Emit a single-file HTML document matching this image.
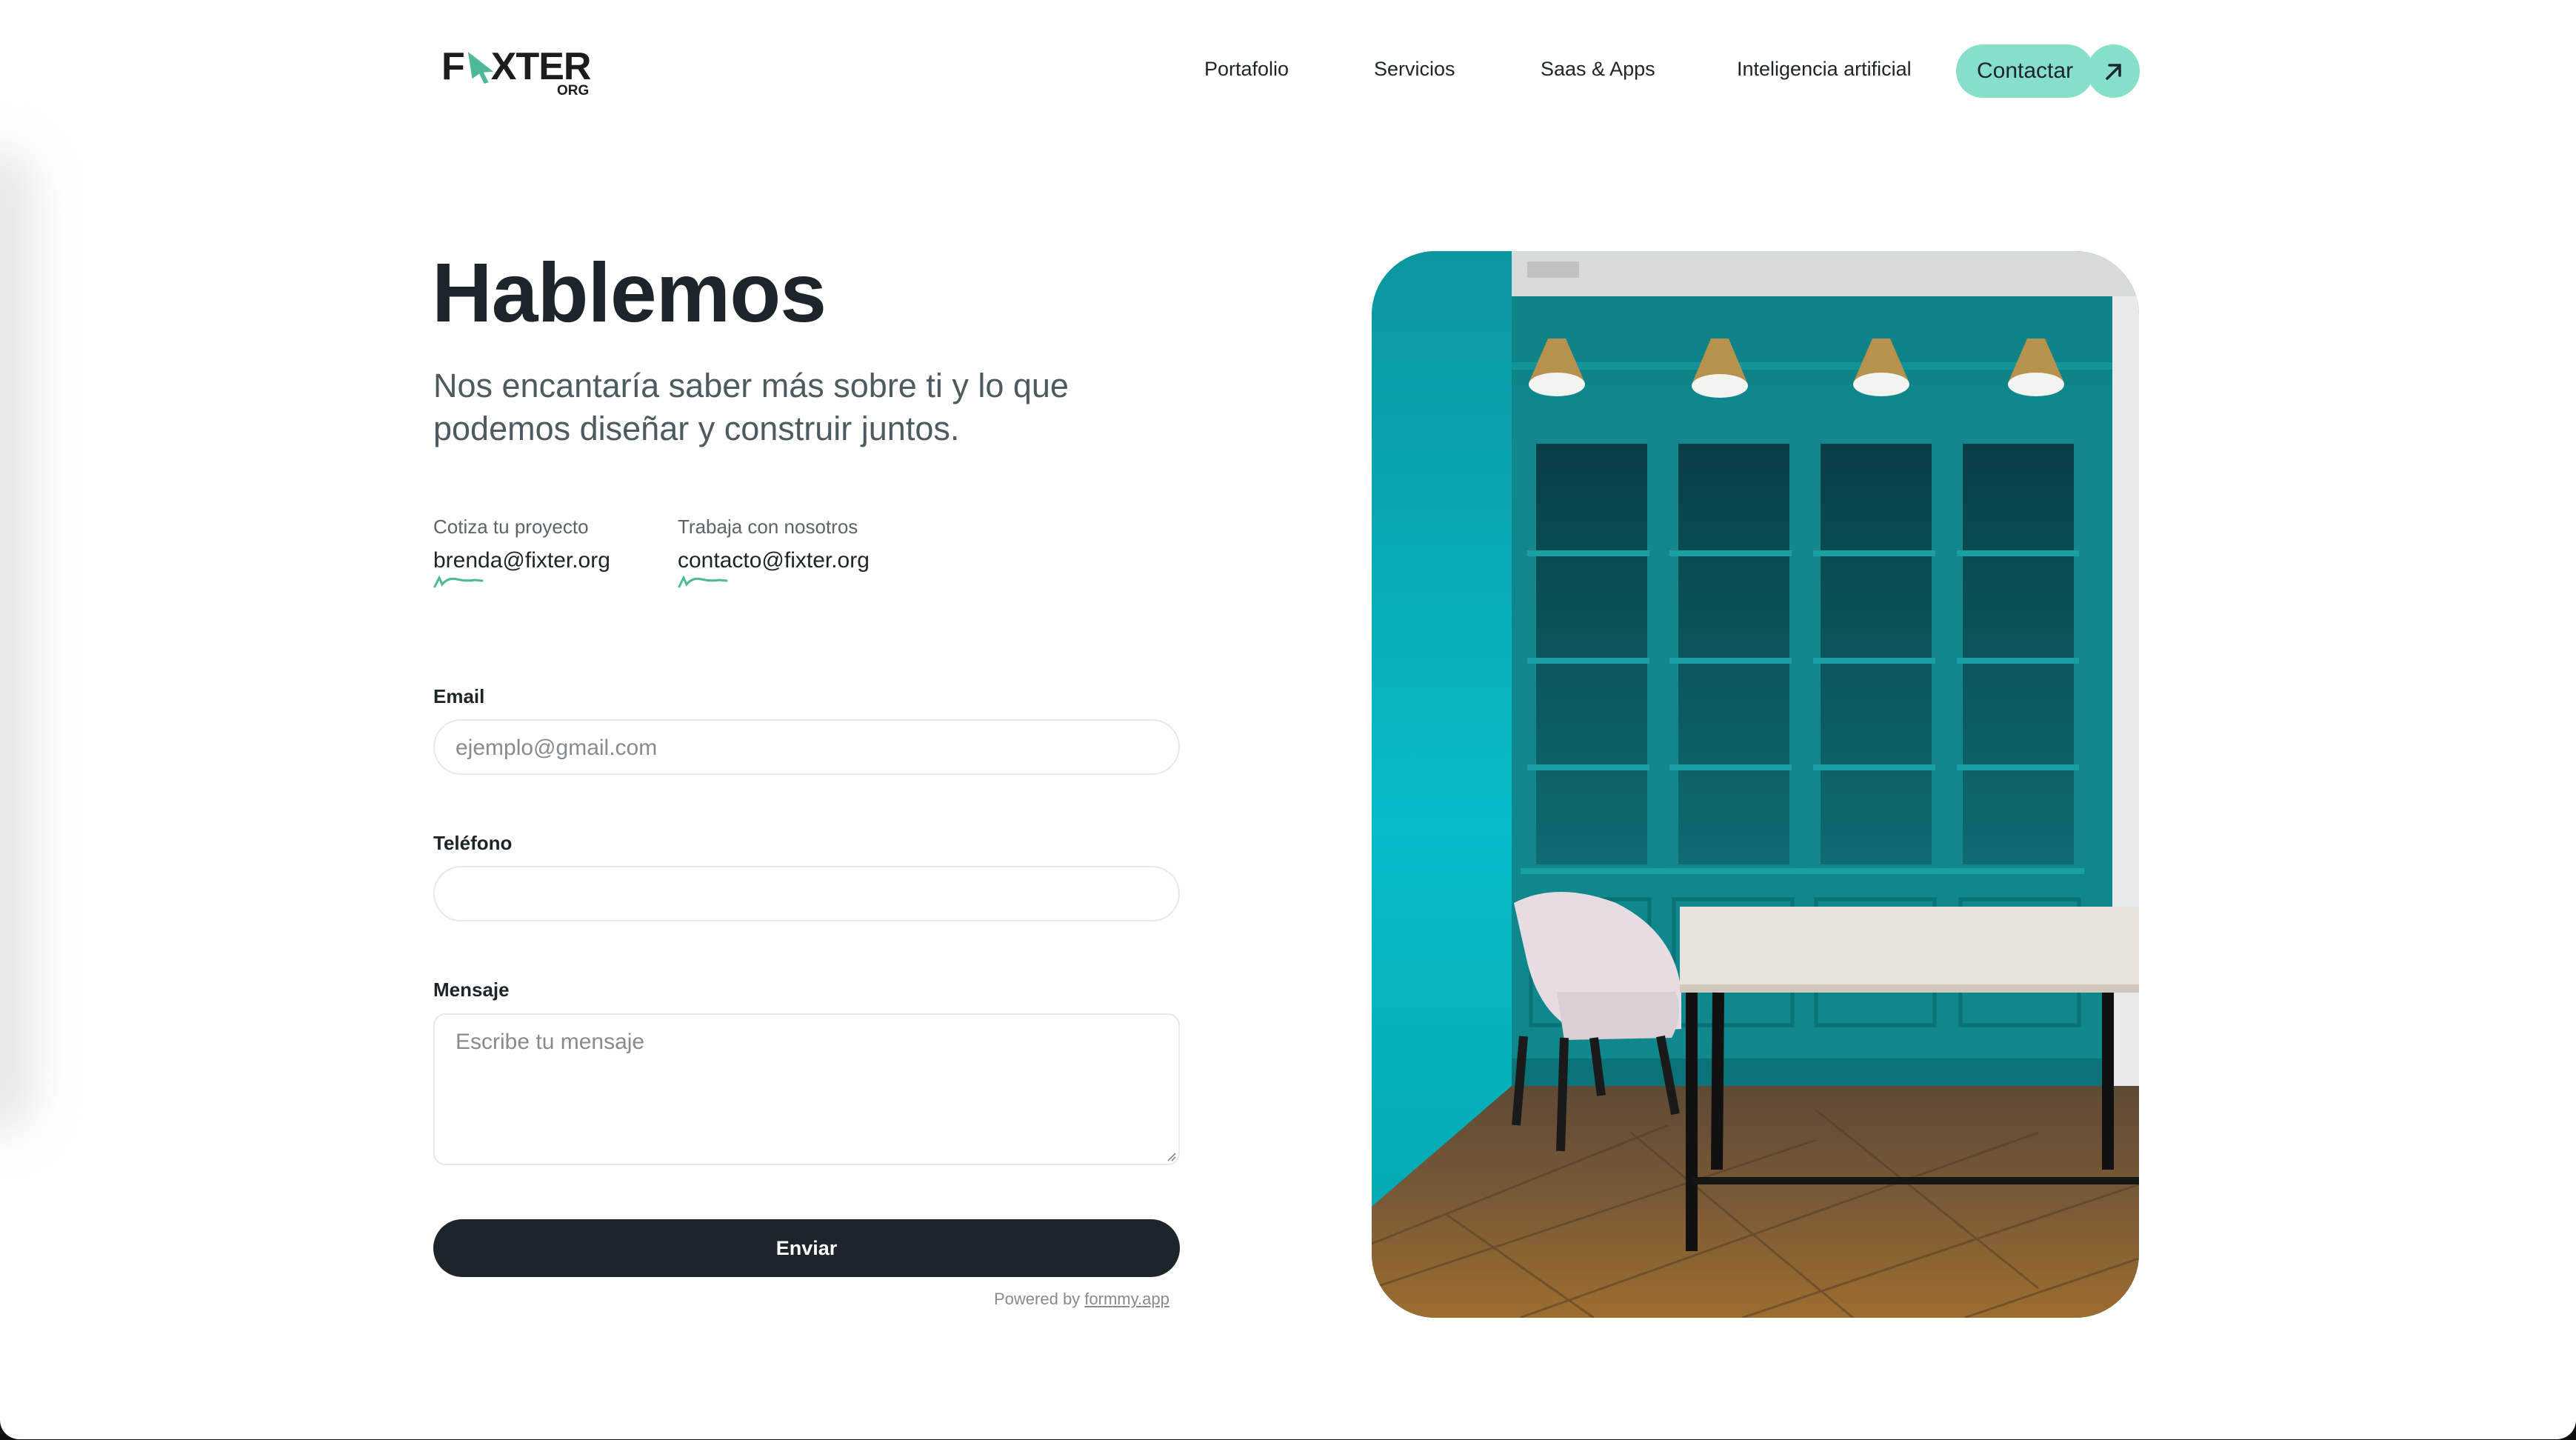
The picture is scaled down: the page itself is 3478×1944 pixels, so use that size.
<!DOCTYPE html>
<html><head><meta charset="utf-8">
<style>
*{box-sizing:border-box;margin:0;padding:0}
html,body{width:3478px;height:1944px;overflow:hidden;background:#0b0f0f}
body{font-family:"Liberation Sans",sans-serif;color:#1c2529}
.page{position:absolute;left:0;top:0;width:3478px;height:1943px;background:#fff;border-radius:0 0 26px 26px;overflow:hidden}
.shadow{position:absolute;left:-50px;top:200px;width:95px;height:1330px;background:#e6e6e6;filter:blur(30px);border-radius:50px}
.abs{position:absolute;white-space:nowrap}
.nav{font-size:27px;color:#1c2529;top:78px}
.pill{position:absolute;left:2641px;top:60px;width:186px;height:72px;border-radius:36px;background:#86dfc9;font-size:30px;line-height:72px;padding-left:28px;color:#1c2529}
.circ{position:absolute;left:2818px;top:60px;width:71px;height:72px;border-radius:50%;background:#86dfc9}
h1{position:absolute;left:583px;top:330px;font-size:113px;font-weight:bold;letter-spacing:-1px;color:#1c2529}
.sub{position:absolute;left:585px;top:492px;font-size:45px;line-height:58px;color:#4b5b5f;width:1000px}
.lab{font-size:26px;color:#5b6468;top:696px}
.mail{font-size:30px;color:#1c2529;top:740px}
.fl{font-size:26px;font-weight:bold;color:#1c2529}
.inp{position:absolute;left:585px;width:1008px;border:2px solid #e6e8e9;border-radius:40px;background:#fff}
.ph{font-size:30px;color:#858b8e}
.btn{position:absolute;left:585px;top:1646px;width:1008px;height:78px;border-radius:39px;background:#1c2529;color:#fff;font-size:27px;font-weight:bold;text-align:center;line-height:78px}
.img{position:absolute;left:1852px;top:339px;width:1036px;height:1440px;border-radius:86px;overflow:hidden}
</style></head><body>
<div class="page">
<div class="shadow"></div>

<div class="abs" style="left:596px;top:62px;font-size:52px;font-weight:bold;letter-spacing:-1px;color:#1c1c1c;line-height:56px">F<span style="display:inline-block;width:36px"></span>XTER</div>
<svg class="abs" style="left:628px;top:68px" width="44" height="46" viewBox="0 0 46 48"><path d="M4 2 L40 30 L26 31 L33 45 L27 47 L20 33 L10 40 Z" fill="#4fb89b"/></svg>
<div class="abs" style="left:752px;top:112px;font-size:19px;font-weight:bold;color:#1c1c1c">ORG</div>

<div class="abs nav" style="left:1626px">Portafolio</div>
<div class="abs nav" style="left:1855px">Servicios</div>
<div class="abs nav" style="left:2080px">Saas &amp; Apps</div>
<div class="abs nav" style="left:2345px">Inteligencia artificial</div>
<div class="pill">Contactar</div>
<div class="circ"><svg width="71" height="72" viewBox="0 0 71 72"><path d="M27 46 L44 29 M30 28 L44 28 L44 42" stroke="#1c2529" stroke-width="3.5" fill="none" stroke-linecap="round"/></svg></div>

<h1>Hablemos</h1>
<div class="sub">Nos encantaría saber más sobre ti y lo que<br>podemos diseñar y construir juntos.</div>

<div class="abs lab" style="left:585px">Cotiza tu proyecto</div>
<div class="abs lab" style="left:915px">Trabaja con nosotros</div>
<div class="abs mail" style="left:585px">brenda@fixter.org</div>
<div class="abs mail" style="left:915px">contacto@fixter.org</div>
<svg class="abs" style="left:585px;top:775px" width="70" height="20" viewBox="0 0 70 20"><path d="M2 17 L8 5 L12 14 Q20 4 32 7 Q45 10 56 8 L66 9" stroke="#4fb89b" stroke-width="3" fill="none" stroke-linecap="round"/></svg>
<svg class="abs" style="left:915px;top:775px" width="70" height="20" viewBox="0 0 70 20"><path d="M2 17 L8 5 L12 14 Q20 4 32 7 Q45 10 56 8 L66 9" stroke="#4fb89b" stroke-width="3" fill="none" stroke-linecap="round"/></svg>

<div class="abs fl" style="left:585px;top:925px">Email</div>
<div class="inp" style="top:971px;height:75px"><div class="abs ph" style="left:28px;top:20px">ejemplo@gmail.com</div></div>
<div class="abs fl" style="left:585px;top:1123px">Teléfono</div>
<div class="inp" style="top:1169px;height:75px"></div>
<div class="abs fl" style="left:585px;top:1321px">Mensaje</div>
<div class="inp" style="top:1368px;height:205px;border-radius:16px"><div class="abs ph" style="left:28px;top:20px">Escribe tu mensaje</div>
<svg class="abs" style="right:2px;bottom:2px" width="16" height="16"><path d="M4 14 L14 4 M9 14 L14 9" stroke="#777" stroke-width="1.5"/></svg></div>
<div class="btn">Enviar</div>
<div class="abs" style="left:1342px;top:1741px;font-size:22px;color:#858b8e">Powered by <span style="text-decoration:underline">formmy.app</span></div>

<div class="img">
<svg width="1036" height="1440" viewBox="0 0 1036 1440">
<defs>
<linearGradient id="lw" x1="0" y1="0" x2="0" y2="1"><stop offset="0" stop-color="#0c96a0"/><stop offset="0.6" stop-color="#05bcc8"/><stop offset="1" stop-color="#04aab4"/></linearGradient>
<linearGradient id="sh" x1="0" y1="0" x2="0" y2="1"><stop offset="0" stop-color="#073f45"/><stop offset="1" stop-color="#0d6c72"/></linearGradient>
<linearGradient id="fl" x1="0" y1="0" x2="0" y2="1"><stop offset="0" stop-color="#5e4a35"/><stop offset="0.5" stop-color="#7a5a36"/><stop offset="1" stop-color="#9d6d2e"/></linearGradient>
</defs>
<rect width="1036" height="1440" fill="#0f878c"/>
<rect x="184" y="0" width="852" height="61" fill="#d8dbdb"/>
<rect x="210" y="14" width="70" height="22" fill="#bfc3c3"/>
<rect x="189" y="61" width="811" height="120" fill="#0e8489"/>
<rect x="189" y="150" width="811" height="10" fill="#12959a"/>
<polygon points="0,0 189,0 189,1127 0,1290" fill="url(#lw)"/>
<rect x="1000" y="61" width="36" height="1120" fill="#e6eaea"/>
<g fill="#13878c">
<rect x="201" y="247" width="180" height="592"/><rect x="393" y="247" width="180" height="592"/><rect x="589" y="247" width="178" height="592"/><rect x="782" y="247" width="180" height="592"/>
</g>
<g fill="url(#sh)">
<rect x="222" y="260" width="150" height="568"/><rect x="414" y="260" width="150" height="568"/><rect x="606" y="260" width="150" height="568"/><rect x="798" y="260" width="150" height="568"/>
</g>
<g fill="#18a0a6">
<rect x="210" y="404" width="165" height="8"/><rect x="402" y="404" width="165" height="8"/><rect x="596" y="404" width="165" height="8"/><rect x="790" y="404" width="165" height="8"/>
<rect x="210" y="549" width="165" height="8"/><rect x="402" y="549" width="165" height="8"/><rect x="596" y="549" width="165" height="8"/><rect x="790" y="549" width="165" height="8"/>
<rect x="210" y="693" width="165" height="8"/><rect x="402" y="693" width="165" height="8"/><rect x="596" y="693" width="165" height="8"/><rect x="790" y="693" width="165" height="8"/>
<rect x="201" y="833" width="761" height="8"/>
</g>
<g fill="none" stroke="#0a7176" stroke-width="5">
<rect x="215" y="875" width="160" height="170"/><rect x="408" y="875" width="160" height="170"/><rect x="600" y="875" width="160" height="170"/><rect x="795" y="875" width="160" height="170"/>
</g>
<rect x="189" y="1090" width="811" height="37" fill="#0b7378"/>
<polygon points="0,1290 189,1127 1036,1127 1036,1440 0,1440" fill="url(#fl)"/>
<g stroke="#4e3c2a" stroke-width="3" opacity="0.5">
<path d="M0 1340 L400 1180 M0 1400 L600 1200 M200 1440 L900 1190 M500 1440 L1036 1260 M800 1440 L1036 1360"/>
<path d="M100 1300 L300 1440 M350 1190 L650 1440 M600 1160 L900 1400"/>
</g>
<g>
<path d="M238 118 L262 118 L288 178 L212 178 Z" fill="#b6924c"/><ellipse cx="250" cy="180" rx="38" ry="16" fill="#f3f3ef"/>
<path d="M458 118 L482 118 L508 180 L432 180 Z" fill="#b6924c"/><ellipse cx="470" cy="182" rx="38" ry="16" fill="#f3f3ef"/>
<path d="M676 118 L700 118 L726 178 L650 178 Z" fill="#b6924c"/><ellipse cx="688" cy="180" rx="38" ry="16" fill="#f3f3ef"/>
<path d="M885 118 L909 118 L935 178 L859 178 Z" fill="#b6924c"/><ellipse cx="897" cy="180" rx="38" ry="16" fill="#f3f3ef"/>
</g>
<path d="M192 880 Q250 850 330 880 Q410 920 418 1000 L418 1050 L290 1058 Q230 1040 210 960 Z" fill="#e5dde1"/>
<path d="M250 1000 L410 1000 Q422 1030 405 1062 L260 1065 Z" fill="#d9d0d6"/>
<path d="M205 1060 L195 1180 M260 1062 L255 1215 M390 1060 L410 1165 M300 1062 L310 1140" stroke="#1a1a1a" stroke-width="12"/>
<rect x="416" y="885" width="620" height="116" fill="#e7e2da"/>
<rect x="416" y="990" width="620" height="11" fill="#cfc8bc"/>
<path d="M432 1001 L432 1350 M468 1001 L466 1240 M994 1001 L994 1240" stroke="#111" stroke-width="16"/>
<rect x="432" y="1250" width="604" height="10" fill="#151515"/>
</svg>
</div>
</div>
</body></html>
